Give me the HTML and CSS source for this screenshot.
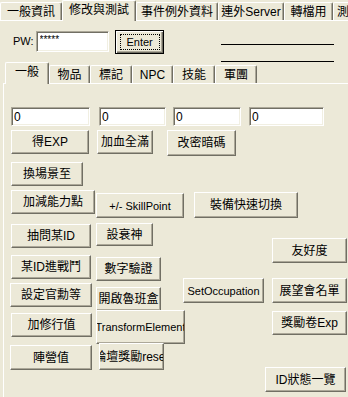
FILE: index.html
```html
<!DOCTYPE html>
<html lang="zh-Hant">
<head>
<meta charset="utf-8">
<title>修改與測試</title>
<link rel="stylesheet" href="styles.css">
</head>
<body>
<div class="tabs">
  <div class="tab t1">一般資訊</div>
  <div class="tab active t2">修改與測試</div>
  <div class="tab t3">事件例外資料</div>
  <div class="tab t4">連外Server</div>
  <div class="tab t5">轉檔用</div>
  <div class="tab t6">測試</div>
</div>
<div class="pwrow">
  <span class="pwlabel">PW:</span>
  <input class="field pwinput" type="text" value="*****" readonly>
  <button class="btn enter"><span class="focus">Enter</span></button>
  <div class="lines"></div>
</div>
<div class="subtabs">
  <div class="tab active s1">一般</div>
  <div class="tab s2">物品</div>
  <div class="tab s3">標記</div>
  <div class="tab s4">NPC</div>
  <div class="tab s5">技能</div>
  <div class="tab s6">軍團</div>
</div>
<div class="page">
  <div class="fields">
    <input class="field f1" type="text" value="0" readonly>
    <input class="field f2" type="text" value="0" readonly>
    <input class="field f3" type="text" value="0" readonly>
    <input class="field f4" type="text" value="0" readonly>
  </div>
  <div class="rows">
    <div class="row r1">
      <button class="btn b-exp">得EXP</button>
      <button class="btn b-hp">加血全滿</button>
      <button class="btn b-pw">改密暗碼</button>
    </div>
    <div class="row r2">
      <button class="btn b-warp">換場景至</button>
    </div>
    <div class="row r3">
      <button class="btn b-stat">加減能力點</button>
      <button class="btn latin b-skill">+/- SkillPoint</button>
      <button class="btn b-equip">裝備快速切換</button>
    </div>
    <div class="row r4">
      <button class="btn b-ask">抽問某ID</button>
      <button class="btn b-curse">設衰神</button>
      <button class="btn b-friend">友好度</button>
    </div>
    <div class="row r5">
      <button class="btn b-battle">某ID進戰鬥</button>
      <button class="btn b-verify">數字驗證</button>
    </div>
    <div class="row r6">
      <button class="btn b-rank">設定官勳等</button>
      <button class="btn b-luban">開啟魯班盒</button>
      <button class="btn latin b-occ">SetOccupation</button>
      <button class="btn b-list">展望會名單</button>
    </div>
    <div class="row r7">
      <button class="btn b-train">加修行值</button>
      <button class="btn latin b-elem">TransformElement</button>
      <button class="btn b-bonus">獎勵卷Exp</button>
    </div>
    <div class="row r8">
      <button class="btn b-camp">陣營值</button>
      <button class="btn b-forum">論壇獎勵reset</button>
    </div>
    <div class="row r9">
      <button class="btn b-status">ID狀態一覽</button>
    </div>
  </div>
</div>
</body>
</html>
```

FILE: styles.css
```css
* { box-sizing: border-box; }
html, body { margin: 0; padding: 0; }
body {
  width: 348px;
  height: 397px;
  overflow: hidden;
  background: #ECE9D8;
  color: #000;
  font: 12px "Liberation Sans", "Noto Sans CJK TC", sans-serif;
}

/* tab strips */
.tabs, .subtabs {
  display: flex;
  align-items: flex-end;
  border-bottom: 1px solid #fff;
}
.tabs { height: 21px; }
.subtabs { height: 22px; margin-left: 3px; padding-left: 2px; }

.tab {
  flex: none;
  height: 18px;
  display: flex;
  align-items: center;
  justify-content: center;
  white-space: nowrap;
  overflow: hidden;
  background: #ECE9D8;
  border: 1px solid #fff;
  border-bottom: 0;
  border-right-color: #716F64;
  box-shadow: inset -1px 0 0 #ACA899;
  border-radius: 2px 2px 0 0;
  line-height: 14px;
}
.tabs .tab.active { height: 21px; margin-bottom: -1px; padding-bottom: 2px; }
.subtabs .tab.active { height: 22px; margin-bottom: -1px; padding-bottom: 3px; }

.t1 { width: 62px; }
.t2 { width: 74px; }
.t3 { width: 82px; }
.t4 { width: 66px; }
.t5 { width: 49px; }
.t6 { width: 30px; justify-content: flex-start; padding-left: 3px; }

.s1 { width: 44px; }
.s2 { width: 41px; }
.s3 { width: 42px; }
.s4 { width: 41px; }
.s5 { width: 42px; }
.s6 { width: 42px; }

/* password row */
.pwrow {
  display: flex;
  align-items: flex-start;
  height: 41px;
}
.pwlabel {
  margin: 13px 0 0 13px;
  font-size: 11px;
  line-height: 14px;
}

.field {
  flex: none;
  display: block;
  margin: 0;
  background: #fff;
  color: #000;
  border: 1px solid;
  border-color: #ACA899 #fff #fff #ACA899;
  box-shadow: inset 1px 1px 0 #716F64, inset -1px -1px 0 #F1EFE2;
  font: 12px "Liberation Sans", "Noto Sans CJK TC", sans-serif;
  padding: 0 0 0 2px;
  outline: none;
  -webkit-appearance: none;
  appearance: none;
}
.pwinput {
  margin: 10px 0 0 2px;
  width: 73px;
  height: 21px;
  font-size: 10px;
  padding: 0 0 4px 3px;
}

.btn {
  flex: none;
  display: flex;
  align-items: center;
  justify-content: center;
  overflow: hidden;
  white-space: nowrap;
  margin: 0;
  padding: 0;
  background: #ECE9D8;
  color: #000;
  border: 1px solid;
  border-color: #fff #716F64 #716F64 #fff;
  box-shadow: inset -1px -1px 0 #ACA899;
  font: 12px "Liberation Sans", "Noto Sans CJK TC", sans-serif;
  line-height: 14px;
}
.btn.latin { font-size: 11px; }

.enter {
  margin: 9px 0 0 6px;
  width: 49px;
  height: 24px;
  border-color: #000;
  box-shadow: inset 1px 1px 0 #fff, inset -1px -1px 0 #716F64, inset -2px -2px 0 #ACA899;
  font-size: 11px;
  padding: 3px 3px 3px 4px;
  align-items: stretch;
}
.enter .focus {
  flex: 1;
  display: flex;
  align-items: center;
  justify-content: center;
  border: 1px dotted #000;
}

.lines {
  flex: none;
  margin: 23px 0 0 57px;
  width: 113px;
  height: 18px;
  border-top: 1px solid #000;
  border-bottom: 1px solid #000;
}

/* tab page */
.page {
  margin-left: 3px;
  border-left: 1px solid #fff;
  height: 313px;
  padding-top: 23px;
}
.fields {
  display: flex;
  height: 19px;
}
.fields .field { height: 19px; }
.f1 { margin-left: 7px; width: 79px; }
.f2 { margin-left: 9px; width: 67px; }
.f3 { margin-left: 7px; width: 68px; }
.f4 { margin-left: 8px; width: 75px; }

.rows { margin-top: 4px; }
.row { display: flex; align-items: flex-start; }
.r1 { height: 32px; }
.r2 { height: 28px; }
.r3 { height: 33px; }
.r4 { height: 32px; }
.r5 { height: 23px; }
.r6 { height: 32px; }
.r7 { height: 33px; }
.r8 { height: 24px; }
.r9 { height: 25px; }

.b-exp    { margin-left: 7px;   width: 78px;  height: 24px; }
.b-hp     { margin-left: 8px;   width: 56px;  height: 24px; }
.b-pw     { margin-left: 14px;  width: 69px;  height: 26px; }
.b-warp   { margin-left: 7px;   width: 72px;  height: 24px; }
.b-stat   { margin-left: 7px;   width: 84px;  height: 24px; }
.b-skill  { margin-left: 1px;   width: 88px;  height: 25px; margin-top: 3px; }
.b-equip  { margin-left: 10px;  width: 104px; height: 26px; margin-top: 2px; }
.b-ask    { margin-left: 7px;   width: 80px;  height: 24px; margin-top: 1px; }
.b-curse  { margin-left: 5px;   width: 57px;  height: 23px; }
.b-friend { margin-left: 119px; width: 75px;  height: 25px; margin-top: 15px; }
.b-battle { margin-left: 7px;   width: 80px;  height: 24px; }
.b-verify { margin-left: 5px;   width: 65px;  height: 24px; margin-top: 2px; }
.b-rank   { margin-left: 6px;   width: 82px;  height: 24px; margin-top: 5px; }
.b-luban  { margin-left: 4px;   width: 65px;  height: 24px; margin-top: 9px; }
.b-occ    { margin-left: 22px;  width: 81px;  height: 25px; }
.b-list   { margin-left: 8px;   width: 75px;  height: 25px; }
.b-train  { margin-left: 7px;   width: 81px;  height: 24px; margin-top: 3px; }
.b-elem   { margin-left: 4px;   width: 89px;  height: 34px; }
.b-bonus  { margin-left: 87px;  width: 75px;  height: 24px; margin-top: 1px; }
.b-camp   { margin-left: 6px;   width: 82px;  height: 25px; margin-top: 2px; }
.b-forum  { margin-left: 7px;   width: 65px;  height: 27px; }
.b-status { margin-left: 261px; width: 81px;  height: 25px; }
```
